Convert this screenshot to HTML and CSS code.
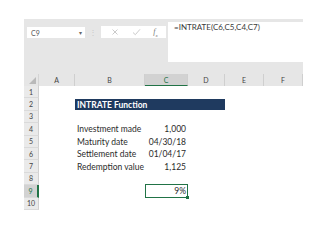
FILE: index.html
```html
<!DOCTYPE html>
<html>
<head>
<meta charset="utf-8">
<link rel="stylesheet" href="styles.css">
</head>
<body>
<div class="excel">
  <div class="toolbar">
    <div class="namebox"><span>C9</span><span class="caret">&#9662;</span></div>
    <div class="dots">&#8942;</div>
    <div class="buttons">
      <svg class="ico" width="8" height="8" viewBox="0 0 8 8"><path d="M1.5 1.5 L6.5 6.5 M6.5 1.5 L1.5 6.5" stroke="#c4c4c4" stroke-width="0.9" fill="none"/></svg>
      <svg class="ico" width="9" height="8" viewBox="0 0 9 8"><path d="M1 4.5 L3.3 6.7 L8 1.3" stroke="#c4c4c4" stroke-width="0.9" fill="none"/></svg>
      <span class="fx">f<sub>x</sub></span>
    </div>
    <div class="formula">=INTRATE(C6,C5,C4,C7)</div>
  </div>
  <div class="sheet">
    <div class="corner"><svg width="7" height="7" viewBox="0 0 7 7"><path d="M7 0 L7 7 L0 7 Z" fill="#b9b9b9"/></svg></div>
    <div class="colh">A</div>
    <div class="colh">B</div>
    <div class="colh sel">C</div>
    <div class="colh">D</div>
    <div class="colh">E</div>
    <div class="colh last">F</div>

    <div class="rowh">1</div><div class="cell full"></div>
    <div class="rowh">2</div><div class="cell"></div><div class="cell title">INTRATE Function</div><div class="cell two"></div>
    <div class="rowh">3</div><div class="cell full"></div>
    <div class="rowh">4</div><div class="cell"></div><div class="cell lbl">Investment made</div><div class="cell num">1,000</div><div class="cell three"></div>
    <div class="rowh">5</div><div class="cell"></div><div class="cell lbl">Maturity date</div><div class="cell num">04/30/18</div><div class="cell three"></div>
    <div class="rowh">6</div><div class="cell"></div><div class="cell lbl">Settlement date</div><div class="cell num">01/04/17</div><div class="cell three"></div>
    <div class="rowh">7</div><div class="cell"></div><div class="cell lbl">Redemption value</div><div class="cell num">1,125</div><div class="cell three"></div>
    <div class="rowh">8</div><div class="cell full"></div>
    <div class="rowh sel">9</div><div class="cell"></div><div class="cell"></div><div class="cell num active">9%<span class="handle"></span></div><div class="cell three"></div>
    <div class="rowh">10</div><div class="cell full"></div>
  </div>
</div>
</body>
</html>
```

FILE: styles.css
```css
html, body {
  margin: 0;
  padding: 0;
  background: #ffffff;
}
body {
  font-family: Lato, "Liberation Sans", sans-serif;
  color: #2b2b2b;
}
.excel {
  margin: 19px 0 0 24px;
  width: 279px;
}
.toolbar {
  position: relative;
  height: 49px;
  background: #e6e6e6;
  display: flex;
  align-items: flex-start;
}
.namebox {
  margin: 8px 0 0 3px;
  width: 58px;
  height: 11px;
  background: #ffffff;
  display: flex;
  align-items: center;
  justify-content: space-between;
  padding: 0 3px 0 4px;
  box-sizing: border-box;
  font-size: 7px;
  color: #555;
}
.caret {
  font-size: 6px;
  color: #666;
}
.dots {
  margin: 8px 0 0 0;
  width: 16px;
  text-align: center;
  font-size: 8px;
  line-height: 11px;
  color: #c8c8c8;
}
.buttons {
  margin: 7px 0 0 0;
  width: 65px;
  height: 12px;
  background: #ffffff;
  display: flex;
  align-items: center;
  justify-content: space-around;
  padding: 0 2px 0 4px;
  box-sizing: border-box;
}
.fx {
  font-family: "Liberation Serif", serif;
  font-style: italic;
  font-size: 8px;
  color: #777;
}
.fx sub {
  font-size: 5px;
}
.formula {
  margin: 3px 0 0 2px;
  flex: 1;
  height: 40px;
  background: #ffffff;
  font-size: 8px;
  line-height: 11px;
  padding-left: 6px;
  color: #3a3a3a;
}
.sheet {
  display: grid;
  grid-template-columns: 15px 36px 70px 43px 37px 39px 39px;
  grid-template-rows: 12px repeat(10, 12.4px);
  border-top: 6px solid #e6e6e6;
}
.corner {
  background: #e6e6e6;
  border-right: 1px solid #d4d4d4;
  display: flex;
  align-items: flex-end;
  justify-content: flex-end;
  padding: 0 2px 2px 0;
}
.colh {
  background: #e6e6e6;
  border-right: 1px solid #cfcfcf;
  font-size: 7px;
  line-height: 12px;
  text-align: center;
  color: #444;
}
.colh.sel {
  background: #d2d2d2;
  border-bottom: 1.5px solid #217346;
  color: #217346;
}
.rowh {
  background: #eaeaea;
  border-bottom: 1px solid #dadada;
  border-right: 1px solid #d0d0d0;
  font-size: 7px;
  text-align: center;
  display: flex;
  align-items: center;
  justify-content: center;
  color: #444;
  box-sizing: border-box;
}
.rowh.sel {
  background: #d2d2d2;
  border-right: 2px solid #217346;
  color: #217346;
}
.cell {
  background: #ffffff;
  font-size: 8.5px;
  display: flex;
  align-items: center;
  white-space: nowrap;
}
.cell.full {
  grid-column: span 6;
}
.cell.two {
  grid-column: span 2;
}
.cell.three {
  grid-column: span 3;
}
.title {
  grid-column: span 3;
  background: #1f3a5f;
  color: #ffffff;
  font-weight: bold;
  padding-left: 2px;
  margin: 0.5px 0;
}
.lbl {
  padding-left: 2px;
}
.num {
  justify-content: flex-end;
  padding-right: 2px;
}
.active {
  position: relative;
  border: 1px solid #217346;
  margin-top: -1px;
  padding-right: 1px;
}
.handle {
  position: absolute;
  right: -2px;
  bottom: -2px;
  width: 3px;
  height: 3px;
  background: #217346;
}
```
